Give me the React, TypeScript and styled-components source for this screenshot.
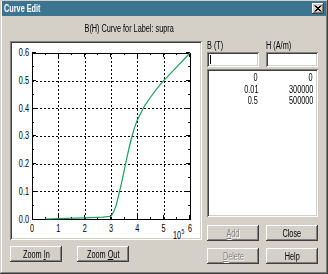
import * as React from 'react';
import styled, { createGlobalStyle } from 'styled-components';

const Global = createGlobalStyle`
  html, body { margin: 0; padding: 0; background: #d4d0c8; }
  body { font-family: "Liberation Sans", Arial, sans-serif; font-size: 10px; }
`;

// the dialog font is a squeezed MS Sans Serif; narrow Arial glyphs stand in for it
const SQUEEZE = 0.73;

const T = styled.span<{ $o?: string }>`
  display: inline-block;
  white-space: nowrap;
  transform: scaleX(${SQUEEZE});
  transform-origin: ${p => p.$o || 'center'};
`;

const Window = styled.div`
  width: 328px;
  height: 274px;
  box-sizing: border-box;
  padding: 1px 2px 2px 2px;
  background: #d4d0c8;
  box-shadow: inset -1px -1px #404040, inset 1px 1px #d4d0c8, inset -2px -2px #808080, inset 2px 2px #ffffff;
  display: flex;
  flex-direction: column;
`;

const TitleBar = styled.div`
  height: 15px;
  background: #3b7592;
  display: flex;
  align-items: center;
  justify-content: space-between;
  padding: 0 2px 0 2px;
`;

const Title = styled(T)`
  color: #fff;
  font-weight: bold;
  font-size: 10px;
`;

const CloseBox = styled.div`
  width: 12px;
  height: 11px;
  box-sizing: border-box;
  background: #d4d0c8;
  box-shadow: inset -1px -1px #404040, inset 1px 1px #ffffff, inset -2px -2px #808080;
  display: flex;
  align-items: center;
  justify-content: center;
`;

const Body = styled.div`
  flex: 1;
  display: flex;
  flex-direction: column;
  padding: 0 8px;
`;

const Caption = styled.div`
  height: 25px;
  line-height: 25px;
  width: 239px;
  text-align: center;
  color: #000;
`;

const Main = styled.div`
  display: flex;
  gap: 5px;
`;

const LeftCol = styled.div`
  width: 192px;
  display: flex;
  flex-direction: column;
  gap: 6px;
`;

const RightCol = styled.div`
  width: 111px;
  display: flex;
  flex-direction: column;
`;

const Sunken = styled.div`
  box-sizing: border-box;
  background: #fff;
  box-shadow: inset 1px 1px #808080, inset -1px -1px #ffffff, inset 2px 2px #404040, inset -2px -2px #d4d0c8;
`;

const PlotPanel = styled(Sunken)`
  height: 199px;
  padding: 2px;
`;

const Row = styled.div<{ $gap: number; $top?: number }>`
  display: flex;
  gap: ${p => p.$gap}px;
  margin-top: ${p => p.$top || 0}px;
`;

const Button = styled.div<{ $disabled?: boolean }>`
  width: 52px;
  height: 16px;
  box-sizing: border-box;
  display: flex;
  align-items: center;
  justify-content: center;
  background: #d4d0c8;
  box-shadow: inset -1px -1px #404040, inset 1px 1px #ffffff, inset -2px -2px #808080;
  color: ${p => (p.$disabled ? '#808080' : '#000')};
  text-shadow: ${p => (p.$disabled ? '1px 1px #ffffff' : 'none')};
`;

const Labels = styled.div`
  height: 11px;
  display: flex;
  gap: 7px;
  line-height: 10px;
  & > span { width: 52px; }
`;

const Edit = styled(Sunken)`
  width: 52px;
  height: 15px;
  padding: 3px 0 0 3px;
`;

const Caret = styled.div`
  width: 1px;
  height: 9px;
  background: #000;
`;

const ListBox = styled(Sunken)`
  height: 148px;
  margin-top: 2px;
  margin-bottom: 8px;
  padding-top: 3px;
`;

const ListRow = styled.div`
  display: grid;
  grid-template-columns: 51px 1fr;
  height: 11.5px;
  line-height: 11.5px;
  & > span { text-align: right; }
  & > span:last-child { padding-right: 5px; }
`;

const X = (h: number) => 20 + h * 26.33;
const Y = (b: number) => 176 - b * 276.7;

const curve: [number, number][] = [
  [0.5, 0], [1, 0.001], [2, 0.004], [2.7, 0.007], [3, 0.01], [3.1, 0.025], [3.2, 0.05], [3.3, 0.09],
  [3.4, 0.13], [3.5, 0.175], [3.6, 0.22], [3.7, 0.262], [3.8, 0.3], [3.9, 0.332], [4.0, 0.358],
  [4.25, 0.405], [4.5, 0.44], [4.75, 0.472], [5, 0.5], [5.5, 0.55], [6, 0.6],
];

function SvgText(props: { x: number; y: number; anchor?: 'start' | 'middle' | 'end'; size?: number; children: React.ReactNode }) {
  return (
    <text
      transform={`translate(${props.x},${props.y}) scale(${SQUEEZE},1)`}
      textAnchor={props.anchor || 'start'}
      fontSize={props.size || 10}
    >
      {props.children}
    </text>
  );
}

function Plot() {
  const xs = [0, 1, 2, 3, 4, 5, 6];
  const ys = [0, 0.1, 0.2, 0.3, 0.4, 0.5, 0.6];
  const ticks: React.ReactNode[] = [];
  for (let i = 0; i <= 12; i++) {
    const h = i / 2;
    const len = i % 2 === 0 ? 4 : 2;
    ticks.push(<line key={'bx' + i} x1={X(h)} y1={Y(0)} x2={X(h)} y2={Y(0) - len} />);
    ticks.push(<line key={'tx' + i} x1={X(h)} y1={Y(0.6)} x2={X(h)} y2={Y(0.6) + len} />);
    const b = i / 20;
    ticks.push(<line key={'ly' + i} x1={X(0)} y1={Y(b)} x2={X(0) + len} y2={Y(b)} />);
    ticks.push(<line key={'ry' + i} x1={X(6)} y1={Y(b)} x2={X(6) - len} y2={Y(b)} />);
  }
  return (
    <svg width="188" height="196" style={{ display: 'block', overflow: 'visible' }} shapeRendering="crispEdges">
      <g stroke="#000" strokeWidth="1" strokeDasharray="2 2">
        {xs.slice(1, 6).map(h => (
          <line key={'gx' + h} x1={Math.round(X(h)) + 0.5} y1={Y(0.6)} x2={Math.round(X(h)) + 0.5} y2={Y(0)} />
        ))}
        {ys.slice(1, 6).map(b => (
          <line key={'gy' + b} x1={X(0)} y1={Math.round(Y(b)) + 0.5} x2={X(6)} y2={Math.round(Y(b)) + 0.5} />
        ))}
      </g>
      <g stroke="#000" strokeWidth="1">
        <rect x={X(0) + 0.5} y={Y(0.6) + 0.5} width={X(6) - X(0)} height={Y(0) - Y(0.6)} fill="none" />
        {ticks}
      </g>
      <polyline
        points={curve.map(([h, b]) => `${X(h)},${Y(b)}`).join(' ')}
        fill="none"
        stroke="#1e9e5e"
        strokeWidth="1.2"
        strokeLinejoin="round"
        shapeRendering="geometricPrecision"
      />
      <g fill="#000" fontFamily='"Liberation Sans", Arial, sans-serif'>
        {ys.map(b => (
          <SvgText key={'yl' + b} x={17} y={Y(b) + 3.5} anchor="end">{b.toFixed(1)}</SvgText>
        ))}
        {xs.map(h => (
          <SvgText key={'xl' + h} x={X(h)} y={189} anchor="middle">{h}</SvgText>
        ))}
        <SvgText x={161} y={196}>10</SvgText>
        <SvgText x={169.5} y={191} size={7}>5</SvgText>
      </g>
    </svg>
  );
}

export default function App() {
  return (
    <>
      <Global />
      <Window>
        <TitleBar>
          <Title $o="left">Curve Edit</Title>
          <CloseBox>
            <svg width="8" height="7" viewBox="0 0 8 7">
              <path d="M0.5 0.5 L6.5 6.5 M1.5 0.5 L7.5 6.5 M6.5 0.5 L0.5 6.5 M7.5 0.5 L1.5 6.5" stroke="#000" strokeWidth="1" />
            </svg>
          </CloseBox>
        </TitleBar>
        <Body>
          <Caption><T>B(H) Curve for Label: supra</T></Caption>
          <Main>
            <LeftCol>
              <PlotPanel>
                <Plot />
              </PlotPanel>
              <Row $gap={15}>
                <Button><T>Zoom <u>I</u>n</T></Button>
                <Button><T>Zoom <u>O</u>ut</T></Button>
              </Row>
            </LeftCol>
            <RightCol>
              <Labels>
                <span><T $o="left">B (T)</T></span>
                <span><T $o="left">H (A/m)</T></span>
              </Labels>
              <Row $gap={7}>
                <Edit><Caret /></Edit>
                <Edit />
              </Row>
              <ListBox>
                <ListRow><span><T $o="right">0</T></span><span><T $o="right">0</T></span></ListRow>
                <ListRow><span><T $o="right">0.01</T></span><span><T $o="right">300000</T></span></ListRow>
                <ListRow><span><T $o="right">0.5</T></span><span><T $o="right">500000</T></span></ListRow>
              </ListBox>
              <Row $gap={7}>
                <Button $disabled><T><u>A</u>dd</T></Button>
                <Button><T>Close</T></Button>
              </Row>
              <Row $gap={7} $top={7}>
                <Button $disabled><T><u>D</u>elete</T></Button>
                <Button><T>Help</T></Button>
              </Row>
            </RightCol>
          </Main>
        </Body>
      </Window>
    </>
  );
}
